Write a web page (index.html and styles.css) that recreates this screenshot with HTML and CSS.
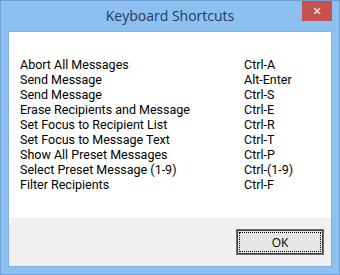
FILE: index.html
```html
<!DOCTYPE html>
<html>
<head>
<meta charset="utf-8">
<link rel="stylesheet" href="styles.css">
</head>
<body>
<div class="window">
  <div class="titlebar">
    <span class="title">Keyboard Shortcuts</span>
    <span class="close">✕</span>
  </div>
  <div class="client">
    <div class="content">
      <div class="grid">
        <span>Abort All Messages</span><span>Ctrl-A</span>
        <span>Send Message</span><span>Alt-Enter</span>
        <span>Send Message</span><span>Ctrl-S</span>
        <span>Erase Recipients and Message</span><span>Ctrl-E</span>
        <span>Set Focus to Recipient List</span><span>Ctrl-R</span>
        <span>Set Focus to Message Text</span><span>Ctrl-T</span>
        <span>Show All Preset Messages</span><span>Ctrl-P</span>
        <span>Select Preset Message (1-9)</span><span>Ctrl-(1-9)</span>
        <span>Filter Recipients</span><span>Ctrl-F</span>
      </div>
    </div>
    <div class="footer">
      <button class="ok"><span class="focus">OK</span></button>
    </div>
  </div>
</div>
</body>
</html>
```
FILE: styles.css
```css
html, body { margin: 0; padding: 0; }
body { width: 340px; height: 275px; overflow: hidden; }
.window {
  box-sizing: border-box;
  width: 340px; height: 275px;
  background: #8cc0ee;
  border: 1px solid #6d9fd2;
  display: flex; flex-direction: column;
  position: relative;
}
.titlebar {
  height: 30px;
  display: flex; align-items: center; justify-content: center;
}
.title {
  font-family: "Open Sans", "Noto Sans", sans-serif;
  font-size: 14px;
  color: #1e3b5e;
  margin-top: -2px;
}
.close {
  position: absolute;
  top: 0; right: 7px;
  width: 30px; height: 20px;
  background: #c75050;
  color: #fff;
  font-family: "DejaVu Sans", sans-serif;
  font-size: 11px; font-weight: bold;
  display: flex; align-items: center; justify-content: center;
}
.client {
  flex: 1;
  margin: 0 7px 7px 7px;
  border: 1px solid #7fb3e3;
  display: flex; flex-direction: column;
  background: #f0f0f0;
}
.content {
  background: #fff;
  height: 186px;
  padding: 25px 0 0 11px;
  box-sizing: border-box;
}
.grid {
  display: grid;
  grid-template-columns: 224px auto;
  font-family: Roboto, "Open Sans", sans-serif;
  font-size: 12.5px;
  line-height: 15px;
  color: #000;
  letter-spacing: 0;
}
.footer {
  flex: 1;
  display: flex; justify-content: flex-end; align-items: flex-start;
  padding: 11px 7px 0 0;
}
.ok {
  box-sizing: border-box;
  width: 88px; height: 26px;
  border: 1px solid #707070;
  box-shadow: inset 0 0 0 1px #3c3c3c;
  background: #e6e6e6;
  padding: 2px;
  display: flex;
  font-family: "Open Sans", "Noto Sans", sans-serif;
  font-size: 12px;
  color: #000;
}
.focus {
  flex: 1;
  border: 1px dotted #000;
  display: flex; align-items: center; justify-content: center;
}
```
